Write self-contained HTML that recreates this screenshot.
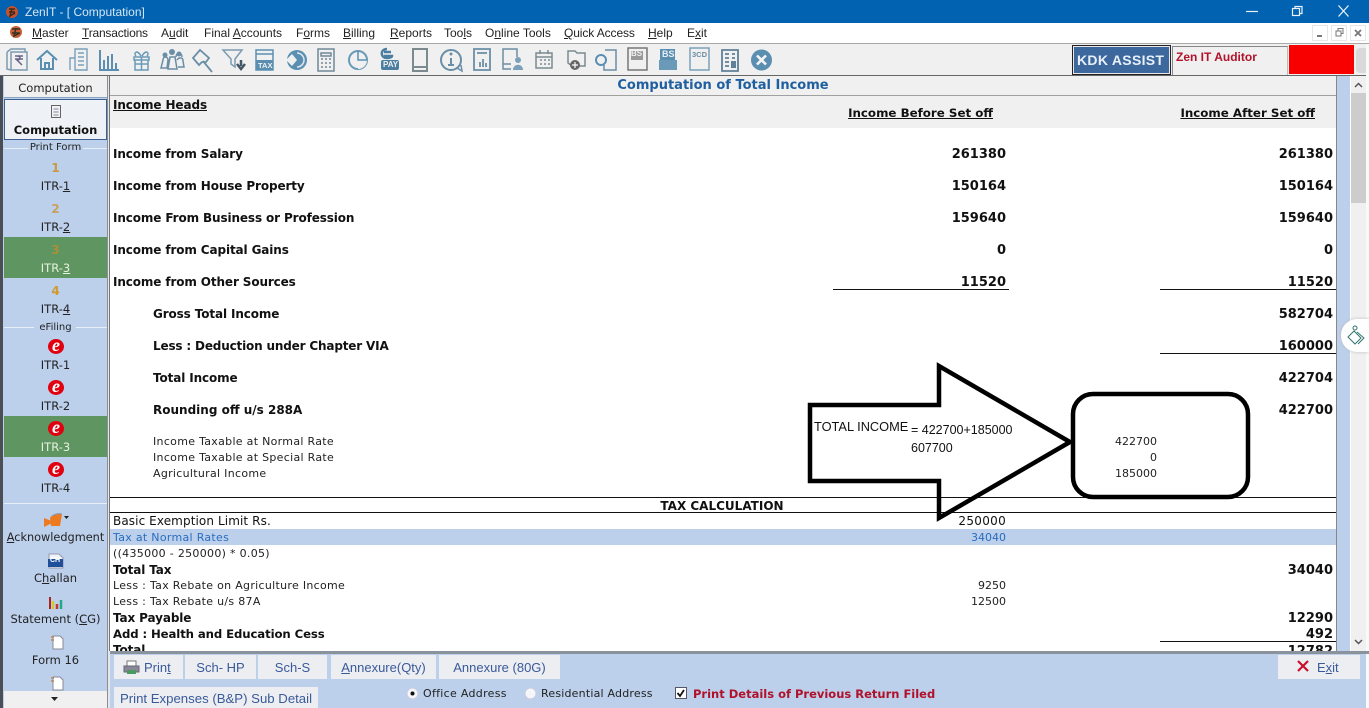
<!DOCTYPE html>
<html><head><meta charset="utf-8"><title>ZenIT - [ Computation]</title>
<style>
html,body{margin:0;padding:0;background:#fff}
#p{position:relative;width:1369px;height:708px;overflow:hidden;background:#fff;font-family:"DejaVu Sans",sans-serif;color:#111}
#p div{position:absolute}
.t{white-space:nowrap;line-height:16px;height:16px}
.b{font-weight:bold;font-size:12px;color:#111;margin-top:1px;letter-spacing:-.12px}
.b.r{margin-top:2px;letter-spacing:0}
.n{font-size:11px;color:#222;margin-top:1px;letter-spacing:.3px}
.n.r{letter-spacing:0}
.m{font-size:12px;color:#111;letter-spacing:.1px}
.r{text-align:right}
.menu{font-family:"Liberation Sans",sans-serif;font-size:12px;color:#222;top:25px;white-space:nowrap;line-height:16px}
.side{font-size:11.500px;color:#222;left:4px;width:103px;text-align:center;line-height:14px;white-space:nowrap}
.num{font-weight:bold;font-size:12px;line-height:14px}
.tab{background:#eceef2;font-family:"Liberation Sans",sans-serif;font-size:13px;color:#3a5a9a;text-align:center;line-height:25px;white-space:nowrap}
u{text-decoration:underline}
.ln{background:#111;height:1px}
</style></head><body>
<div id="p">
<!-- title bar -->
<div style="left:0;top:0;width:1369px;height:23px;background:#0062b0"></div>
<svg style="position:absolute;left:5px;top:5px" width="14" height="14"><circle cx="7" cy="7" r="6" fill="#c8502a"/><path d="M4 4h6M4 7h6M7 4l-2 7 5-3" stroke="#3a2a20" stroke-width="1.5" fill="none"/></svg>
<div class="t" style="left:25px;top:4px;font-family:'Liberation Sans',sans-serif;font-size:12px;color:#d6e6f5">ZenIT - [ Computation]</div>
<svg style="position:absolute;left:1240px;top:0" width="125" height="23" fill="none" stroke="#e8f2fa" stroke-width="1.2"><path d="M6 11.5h12"/><rect x="52.5" y="8.5" width="7" height="7"/><path d="M55 8.5v-2h7v7h-2"/><path d="M98.500 5.500l10 11M108.500 5.500l-10 11" stroke-width="1.300"/></svg>
<!-- menu -->
<div style="left:0;top:23px;width:1369px;height:20px;background:#fff"></div>
<svg style="position:absolute;left:9px;top:25px" width="16" height="14"><circle cx="7" cy="7" r="6" fill="#c8603a"/><path d="M3 4h8M3 8h8M7 3l-2 8 6-3" stroke="#3a3020" stroke-width="1.500" fill="none"/></svg>
<div class="menu" style="left:32px"><u>M</u>aster</div>
<div class="menu" style="left:82px;letter-spacing:-.2px"><u>T</u>ransactions</div>
<div class="menu" style="left:161px">A<u>u</u>dit</div>
<div class="menu" style="left:204px">Final <u>A</u>ccounts</div>
<div class="menu" style="left:296px">F<u>o</u>rms</div>
<div class="menu" style="left:343px"><u>B</u>illing</div>
<div class="menu" style="left:390px"><u>R</u>eports</div>
<div class="menu" style="left:444px">Too<u>l</u>s</div>
<div class="menu" style="left:485px">O<u>n</u>line Tools</div>
<div class="menu" style="left:564px;letter-spacing:-.1px"><u>Q</u>uick Access</div>
<div class="menu" style="left:648px"><u>H</u>elp</div>
<div class="menu" style="left:687px">E<u>x</u>it</div>
<svg style="position:absolute;left:1312px;top:24px" width="55" height="18" fill="none" stroke="#777"><rect x="0.500" y="1.500" width="15" height="15" stroke="#e6e6e6"/><rect x="19.500" y="1.500" width="15" height="15" stroke="#e6e6e6"/><rect x="38.500" y="1.500" width="15" height="15" stroke="#e6e6e6"/><path d="M5 12h5" stroke-width="2"/><path d="M24 7h5v5h-5zM26 7V4.500h5v5h-2"/><path d="M43 6l6 6M49 6l-6 6" stroke-width="1.800"/></svg>
<!-- toolbar -->
<div style="left:0;top:43px;width:1369px;height:1px;background:#a8a8a8"></div>
<div style="left:0;top:44px;width:1369px;height:31px;background:#f0f0f0"></div>
<div style="left:0;top:75px;width:1369px;height:1px;background:#666"></div>
<svg style="position:absolute;left:0;top:43px" width="790" height="31" fill="none" stroke="#5b8fb2" stroke-width="1.500">
<g stroke="#7a9bb0"><path d="M7 9l4-3h14v3M7 9v17l4 1V9h16v18H11"/><path d="M15 13h8M15 16h8M17 13c4 0 4 4 0 4l5 5" stroke="#668"/></g>
<path d="M37 17l10-9 10 9M41 15v11h12V15M45 26v-6h4v6" stroke-width="2"/>
<path d="M70 27V15h5v12M75 27V6h12v21zM78 10h6M78 14h6M78 18h6M78 22h6" stroke-width="1.400" stroke="#7aa0ba"/>
<path d="M100 7v20h19M104 26v-9M108 26v-13M112 26V11M116 26v-6" stroke-width="2"/>
<path d="M134 14h15v3h-15zM135 17v10h13V17M141.500 14v13M135 21h13M141 13c-4-7-8-3-5 0M142 13c4-7 8-3 5 0" stroke="#6a9ab8"/>
<path d="M163 17c0-4 5-4 5 0l-1 8h-6zM176 14c0-5 6-5 6 0M168 26l2-12h5l2 12zM177 17c2-3 6-3 6 1l1 6h-6" stroke="#6a8ea6"/><circle cx="172" cy="9" r="3" fill="#6a8ea6" stroke="none"/><circle cx="165" cy="12" r="2.500" fill="#6a8ea6" stroke="none"/><circle cx="179" cy="11" r="2.500" fill="#6a8ea6" stroke="none"/>
<path d="M193 15l7-8 9 8-3 4-4 0-3 3zM203 18l9 11" stroke="#6a8ea6" stroke-width="1.800"/>
<path d="M223 7h19l-7 9v8l-4-3v-5z" stroke="#7a9bb0"/><path d="M241 17v6M237 21l4 5 4-5" stroke="#456" stroke-width="2.500"/>
<path d="M256 7h17v20h-17zM256 11h17" stroke="#5b8fb2"/><rect x="256" y="17" width="17" height="10" fill="#5b8fb2" stroke="none"/>
<circle cx="297" cy="17" r="10" fill="#5b8fb2" stroke="none"/><path d="M286 17l6-6 5 6-5 6z" fill="#f0f0f0" stroke="none"/><path d="M297 10a7 7 0 0 1 0 14" stroke="#dfe8ee"/>
<path d="M318 6h16v22h-16zM321 10h10v3h-10zM321 16h2M325 16h2M329 16h2M321 20h2M325 20h2M329 20h2M321 24h2M325 24h2M329 24h2" stroke="#6f8797"/>
<circle cx="358" cy="17" r="9" stroke="#6a9ab8" stroke-width="2"/><path d="M358 17h9a9 9 0 0 1-9 9z" fill="#f0f0f0" stroke="none"/><path d="M358 8v9h9"/>
<path d="M387 6c-7 0-7 9 0 9 3 0 5-1 5-2h-8M384 9h7" stroke="#4c7ea2" stroke-width="2.500"/><rect x="381" y="17" width="18" height="10" rx="2" fill="#4c7ea2" stroke="none"/>
<path d="M413 6h14v22h-14zM413 24h14" stroke="#7b8a8f" stroke-width="2"/>
<circle cx="451" cy="17" r="10" stroke="#6a8ea6" stroke-width="2"/><path d="M451 15v7M448 22h6" stroke="#6a8ea6" stroke-width="2"/><circle cx="451" cy="11" r="1.500" fill="#6a8ea6" stroke="none"/><path d="M457 25l5 3-1-6" stroke="#6a8ea6"/>
<path d="M474 6h16v21h-16zM477 10h10M480 24v-5M483 24v-8M486 24v-4" stroke="#6a8ea6" stroke-width="1.800"/>
<path d="M511 26h-8V6h14v8M503 21h8" stroke="#6a8ea6" stroke-width="1.500"/><circle cx="518" cy="17" r="3" fill="#7aa0ba" stroke="none"/><path d="M513 27c0-7 10-7 10 0z" fill="#7aa0ba" stroke="none"/>
<path d="M536 10h16v15h-16zM536 14h16M540 7v4M548 7v4M540 17h2M544 17h2M548 17h2M540 21h2M544 21h2M548 21h2" stroke="#7b8a8f"/>
<path d="M568 8h7l2 2h8v13h-13l-4-3z" stroke="#7b8a8f" stroke-width="1.500"/><circle cx="575" cy="22" r="5" fill="#666" stroke="none"/><path d="M572 22h6M575 19v6" stroke="#fff" stroke-width="1.200"/>
<path d="M605 7h11v20h-12v-5" stroke="#6a8ea6"/><circle cx="601" cy="17" r="5" stroke="#5b8fb2" stroke-width="2"/>
<path d="M628 5h19v22h-19z" stroke="#777" stroke-width="1.500"/><rect x="631" y="8" width="12" height="9" fill="#999" stroke="none"/>
<rect x="660" y="6" width="15" height="11" fill="#5b8fb2" stroke="none"/><rect x="659" y="17" width="18" height="10" fill="#6a9ab8" stroke="none"/>
<path d="M690 5h19v22h-19z" stroke="#7aa0ba"/>
<path d="M722 7h16v21h-16zM725 11h4M725 15h4M725 19h4M725 23h4M732 11h3M732 15h3" stroke="#5f8098" stroke-width="1.800"/><rect x="731" y="18" width="5" height="7" fill="#5f8098" stroke="none"/>
<circle cx="761.500" cy="17" r="10.500" fill="#5b8fb2" stroke="none"/><path d="M757 12.500l9 9M766 12.500l-9 9" stroke="#f4f4f4" stroke-width="2.600"/>
</svg>
<div class="t" style="left:258px;top:62px;font-size:7.500px;color:#f0f0f0;font-weight:bold;height:8px;line-height:8px;font-family:'Liberation Sans',sans-serif">TAX</div>
<div class="t" style="left:383px;top:61px;font-size:8px;color:#f0f0f0;font-weight:bold;height:8px;line-height:8px;font-family:'Liberation Sans',sans-serif">PAY</div>
<div class="t" style="left:631px;top:49px;font-size:8px;color:#f0f0f0;font-weight:bold;height:10px;line-height:10px;font-family:'Liberation Sans',sans-serif">BS</div>
<div class="t" style="left:662px;top:49px;font-size:9px;color:#e6eef5;font-weight:bold;height:10px;line-height:10px;font-family:'Liberation Sans',sans-serif">BS</div>
<div class="t" style="left:692px;top:50px;font-size:7.500px;color:#6a8ea6;font-weight:bold;height:9px;line-height:9px;font-family:'Liberation Sans',sans-serif">3CD</div>
<!-- KDK -->
<div style="left:1072px;top:45px;width:99px;height:30px;background:#3c689e;border:1px solid #222;box-sizing:border-box;outline:1px solid #e8e8e8;outline-offset:-2px"></div>
<div class="t" style="left:1077px;top:51px;font-size:14px;font-weight:bold;color:#e8f0f8;font-family:'Liberation Sans',sans-serif;letter-spacing:.3px;line-height:18px;height:18px">KDK ASSIST</div>
<div style="left:1172px;top:46px;width:116px;height:29px;background:#f0f0f0;border-left:1px solid #888;border-top:1px solid #888;border-right:1px solid #bbb;box-sizing:border-box"></div>
<div class="t" style="left:1176px;top:49px;font-size:12px;font-weight:bold;color:#b2122a;font-family:'Liberation Sans',sans-serif">Zen IT Auditor</div>
<div style="left:1289px;top:45px;width:65px;height:29px;background:#f80000"></div>
<div style="left:1356px;top:48px;width:10px;height:25px;background:#d9d9d9;border-radius:4px 0 0 4px"></div>
<!-- left edge and panel -->
<div style="left:0;top:76px;width:3px;height:632px;background:#4a4f56"></div>
<div style="left:3px;top:76px;width:105px;height:632px;background:#bcd0ec"></div>
<div style="left:107px;top:76px;width:1px;height:632px;background:#8a8f96"></div>
<div style="left:108px;top:76px;width:2px;height:632px;background:#e4e6ea"></div>
<div style="left:109px;top:76px;width:1px;height:575px;background:#777"></div>
<div style="left:4px;top:76px;width:103px;height:22px;background:#f0f0f0;border-bottom:1px solid #8aa4c4;box-sizing:border-box"></div>
<div class="side" style="top:81px">Computation</div>
<div style="left:4px;top:99px;width:103px;height:41px;background:#eef1f5;border:1px solid #3c5f90;box-sizing:border-box"></div>
<svg style="position:absolute;left:50px;top:104px" width="12" height="15" fill="none" stroke="#666"><rect x="1.500" y="1.500" width="9" height="12"/><path d="M3.500 5h5M3.500 8h5M3.500 11h5" stroke="#889"/></svg>
<div class="side" style="top:123px;font-weight:bold;color:#111">Computation</div>
<!-- section labels -->
<div style="left:4px;top:148px;width:24px;height:1px;background:#e8eef6"></div><div style="left:83px;top:148px;width:24px;height:1px;background:#e8eef6"></div>
<div class="side" style="top:141px;font-size:10px">Print Form</div>
<div style="left:4px;top:327px;width:30px;height:1px;background:#e8eef6"></div><div style="left:76px;top:327px;width:31px;height:1px;background:#e8eef6"></div>
<div class="side" style="top:321px;font-size:10px">eFiling</div>
<!-- green -->
<div style="left:4px;top:237px;width:103px;height:41px;background:#5f9560"></div>
<div style="left:4px;top:416px;width:103px;height:41px;background:#5f9560"></div>
<!-- ITR print -->
<div class="side num" style="top:161px;color:#c89a40">1</div>
<div class="side" style="top:179px">ITR-<u>1</u></div>
<div class="side num" style="top:202px;color:#c8a060">2</div>
<div class="side" style="top:220px">ITR-<u>2</u></div>
<div class="side num" style="top:243px;color:#a89038">3</div>
<div class="side" style="top:261px;color:#e6f2e0">ITR-<u>3</u></div>
<div class="side num" style="top:284px;color:#d09a30">4</div>
<div class="side" style="top:302px">ITR-<u>4</u></div>
<!-- efiling -->
<svg style="position:absolute;left:48px;top:338px" width="16" height="17"><ellipse cx="8" cy="8.500" rx="8" ry="7.500" fill="#e00010"/></svg>
<div class="side" style="left:48px;width:16px;top:337px;font:italic bold 18px/16px 'Liberation Serif',serif;color:#fff">e</div>
<div class="side" style="top:358px">ITR-1</div>
<svg style="position:absolute;left:48px;top:379px" width="16" height="17"><ellipse cx="8" cy="8.500" rx="8" ry="7.500" fill="#e00010"/></svg>
<div class="side" style="left:48px;width:16px;top:378px;font:italic bold 18px/16px 'Liberation Serif',serif;color:#fff">e</div>
<div class="side" style="top:399px">ITR-2</div>
<svg style="position:absolute;left:48px;top:420px" width="16" height="17"><ellipse cx="8" cy="8.500" rx="8" ry="7.500" fill="#e00010"/></svg>
<div class="side" style="left:48px;width:16px;top:419px;font:italic bold 18px/16px 'Liberation Serif',serif;color:#fff">e</div>
<div class="side" style="top:440px;color:#e6f2e0">ITR-3</div>
<svg style="position:absolute;left:48px;top:461px" width="16" height="17"><ellipse cx="8" cy="8.500" rx="8" ry="7.500" fill="#e00010"/></svg>
<div class="side" style="left:48px;width:16px;top:460px;font:italic bold 18px/16px 'Liberation Serif',serif;color:#fff">e</div>
<div class="side" style="top:481px">ITR-4</div>
<div style="left:4px;top:503px;width:103px;height:1px;background:#e8eef6"></div>
<!-- lower side -->
<svg style="position:absolute;left:42px;top:512px" width="28" height="16"><path d="M2 6l10 4-10 5z" fill="#ee7a20"/><path d="M8 6c2-4 8-6 12-4l-2 12H9z" fill="#ee7a20"/><path d="M10 4c3-2 6-3 10-2" stroke="#7aa0c8" fill="none"/><path d="M22 4h5l-2.500 3z" fill="#222"/></svg>
<div class="side" style="top:531px;font-size:11.300px"><u>A</u>cknowledgment</div>
<svg style="position:absolute;left:47px;top:553px" width="18" height="16"><path d="M2 1h10l4 4v10H2z" fill="#eef3fa" stroke="#99a"/><rect x="1" y="6" width="15" height="8" fill="#1f4f9a"/></svg>
<div class="t" style="left:50px;top:556px;font-size:7px;font-weight:bold;color:#fff;font-family:'Liberation Sans',sans-serif;line-height:10px;height:10px">CH</div>
<div class="side" style="top:571px">C<u>h</u>allan</div>
<svg style="position:absolute;left:49px;top:596px" width="16" height="14"><path d="M1 1v12" stroke="#a22" stroke-width="2"/><path d="M4 13V5" stroke="#cc3" stroke-width="2.500"/><path d="M8 13V8" stroke="#c33" stroke-width="2.500"/><path d="M12 13V4" stroke="#2a8" stroke-width="2.500"/></svg>
<div class="side" style="top:612px">Statement (<u>C</u>G)</div>
<svg style="position:absolute;left:49px;top:634px" width="16" height="16"><path d="M4 2h7l3 3v10H4z" fill="#fff" stroke="#889"/><path d="M2 3h3M2 6h3" stroke="#b85" stroke-width="1.500"/></svg>
<div class="side" style="top:653px">Form 16</div>
<svg style="position:absolute;left:49px;top:675px" width="16" height="16"><path d="M4 2h7l3 3v10H4z" fill="#fff" stroke="#889"/><path d="M2 3h3M2 6h3" stroke="#b85" stroke-width="1.500"/></svg>
<div style="left:4px;top:691px;width:103px;height:17px;background:#f0f0f0"></div>
<svg style="position:absolute;left:51px;top:697px" width="8" height="5"><path d="M0 0h7l-3.500 4z" fill="#222"/></svg>
<!-- header band -->
<div style="left:110px;top:76px;width:1227px;height:19px;background:#f0f0f0"></div>
<div style="left:110px;top:95px;width:1227px;height:1px;background:#a0a0a0"></div>
<div style="left:110px;top:96px;width:1227px;height:32px;background:#f0f0f0"></div>
<div class="t" style="left:523px;width:400px;top:78px;text-align:center;font-size:13px;font-weight:bold;color:#1f5fa0">Computation of Total Income</div>
<div class="t b" style="left:113px;top:97px;margin-top:0;letter-spacing:-.1px"><u>Income Heads</u></div>
<div class="t b r" style="left:693px;width:300px;top:105px;margin-top:0;font-size:11.850px"><u>Income Before Set off</u></div>
<div class="t b r" style="left:1015px;width:300px;top:105px;margin-top:0;font-size:11.850px"><u>Income After Set off</u></div>
<!-- rows -->
<div class="t b" style="left:113px;top:145px">Income from Salary</div>
<div class="t b r" style="left:806px;width:200px;top:145px;font-size:13px">261380</div>
<div class="t b r" style="left:1133px;width:200px;top:145px;font-size:13px">261380</div>
<div class="t b" style="left:113px;top:177px">Income from House Property</div>
<div class="t b r" style="left:806px;width:200px;top:177px;font-size:13px">150164</div>
<div class="t b r" style="left:1133px;width:200px;top:177px;font-size:13px">150164</div>
<div class="t b" style="left:113px;top:209px">Income From Business or Profession</div>
<div class="t b r" style="left:806px;width:200px;top:209px;font-size:13px">159640</div>
<div class="t b r" style="left:1133px;width:200px;top:209px;font-size:13px">159640</div>
<div class="t b" style="left:113px;top:241px">Income from Capital Gains</div>
<div class="t b r" style="left:806px;width:200px;top:241px;font-size:13px">0</div>
<div class="t b r" style="left:1133px;width:200px;top:241px;font-size:13px">0</div>
<div class="t b" style="left:113px;top:273px">Income from Other Sources</div>
<div class="t b r" style="left:806px;width:200px;top:273px;font-size:13px">11520</div>
<div class="t b r" style="left:1133px;width:200px;top:273px;font-size:13px">11520</div>
<div class="ln" style="left:833px;top:289px;width:176px"></div>
<div class="ln" style="left:1160px;top:289px;width:176px"></div>
<div class="t b" style="left:153px;top:305px">Gross Total Income</div>
<div class="t b r" style="left:1133px;width:200px;top:305px;font-size:13px">582704</div>
<div class="t b" style="left:153px;top:337px;letter-spacing:-.17px">Less : Deduction under Chapter VIA</div>
<div class="t b r" style="left:1133px;width:200px;top:337px;font-size:13px">160000</div>
<div class="ln" style="left:1160px;top:353px;width:176px"></div>
<div class="t b" style="left:153px;top:369px">Total Income</div>
<div class="t b r" style="left:1133px;width:200px;top:369px;font-size:13px">422704</div>
<div class="t b" style="left:153px;top:401px;letter-spacing:0">Rounding off u/s 288A</div>
<div class="t b r" style="left:1133px;width:200px;top:401px;font-size:13px">422700</div>
<div class="t n" style="left:153px;top:433px">Income Taxable at Normal Rate</div>
<div class="t n" style="left:153px;top:449px">Income Taxable at Special Rate</div>
<div class="t n" style="left:153px;top:465px">Agricultural Income</div>
<div class="t n r" style="left:957px;width:200px;top:433px">422700</div>
<div class="t n r" style="left:957px;width:200px;top:449px">0</div>
<div class="t n r" style="left:957px;width:200px;top:465px">185000</div>
<!-- tax calc -->
<div class="ln" style="left:110px;top:497px;width:1227px"></div>
<div class="ln" style="left:110px;top:512px;width:1227px"></div>
<div class="t b" style="left:522px;width:400px;top:498px;text-align:center;margin-top:0;letter-spacing:0">TAX CALCULATION</div>
<div class="t m" style="left:113px;top:513px">Basic Exemption Limit Rs.</div>
<div class="t m r" style="left:806px;width:200px;top:513px;letter-spacing:.3px">250000</div>
<div style="left:110px;top:529px;width:1227px;height:16px;background:#bcd0ec"></div>
<div class="t n" style="left:113px;top:529px;color:#2a6cc0">Tax at Normal Rates</div>
<div class="t n r" style="left:806px;width:200px;top:529px;color:#2a6cc0">34040</div>
<div class="t n" style="left:113px;top:545px">((435000 - 250000) * 0.05)</div>
<div class="t b" style="left:113px;top:561px">Total Tax</div>
<div class="t b r" style="left:1133px;width:200px;top:561px;font-size:13px">34040</div>
<div class="t n" style="left:113px;top:577px">Less : Tax Rebate on Agriculture Income</div>
<div class="t n r" style="left:806px;width:200px;top:577px">9250</div>
<div class="t n" style="left:113px;top:593px">Less : Tax Rebate u/s 87A</div>
<div class="t n r" style="left:806px;width:200px;top:593px">12500</div>
<div class="t b" style="left:113px;top:609px">Tax Payable</div>
<div class="t b r" style="left:1133px;width:200px;top:609px;font-size:13px">12290</div>
<div class="t b" style="left:113px;top:625px;font-size:11.700px;letter-spacing:-.1px">Add : Health and Education Cess</div>
<div class="t b r" style="left:1133px;width:200px;top:625px;font-size:13px">492</div>
<div class="ln" style="left:1160px;top:641px;width:176px"></div>
<div class="t b" style="left:113px;top:641px">Total</div>
<div class="t b r" style="left:1133px;width:200px;top:642px;font-size:13px">12782</div>
<!-- annotation -->
<svg style="position:absolute;left:800px;top:355px" width="460" height="175" fill="#fff" stroke="#000" stroke-width="4.500"><path fill="none" d="M10 50H139V11L270 87 139 163V126H10Z"/><rect x="273" y="39" width="175" height="103" rx="20" fill="none"/></svg>
<div class="t" style="left:814px;top:419px;font-family:'Liberation Sans',sans-serif;font-size:12.800px;color:#111">TOTAL INCOME</div>
<div class="t" style="left:911px;top:422px;font-family:'Liberation Sans',sans-serif;font-size:12.500px;color:#111">= 422700+185000</div>
<div class="t" style="left:911px;top:440px;font-family:'Liberation Sans',sans-serif;font-size:12.500px;color:#111">607700</div>
<!-- right strip/scrollbar -->
<div style="left:1336px;top:76px;width:1px;height:575px;background:#888"></div>
<div style="left:1337px;top:76px;width:13px;height:575px;background:#bcd0ec"></div>
<div style="left:1351px;top:76px;width:15px;height:575px;background:#f0f0f0"></div>
<div style="left:1351px;top:93px;width:15px;height:110px;background:#cdcdcd"></div>
<div style="left:1366px;top:44px;width:3px;height:664px;background:#fafafa"></div>
<svg style="position:absolute;left:1351px;top:78px" width="15" height="572" fill="none" stroke="#555" stroke-width="1.500"><path d="M4 9l3.500-3.500L11 9"/><path d="M4 562l3.500 3.500L11 562"/></svg>
<!-- floating widget -->
<div style="left:1341px;top:319px;width:28px;height:33px;background:#fff;border-radius:16px 0 0 16px;box-shadow:0 0 3px #bbb"></div>
<svg style="position:absolute;left:1346px;top:325px" width="20" height="22" fill="none" stroke="#2f7570" stroke-width="1"><circle cx="9" cy="3" r="2"/><path d="M8 6l7 7-6 6-7-7z"/><path d="M11 7l7 6-6 6"/></svg>
<!-- bottom -->
<div style="left:110px;top:651px;width:1259px;height:3px;background:#8a929c"></div>
<div style="left:110px;top:654px;width:1256px;height:54px;background:#bcd0ec"></div>
<div class="tab" style="left:114px;top:655px;width:69px;height:24px;line-height:26px;text-align:left;padding-left:30px;box-sizing:border-box">Prin<u>t</u></div>
<svg style="position:absolute;left:123px;top:660px" width="17" height="15"><rect x="4" y="1" width="9" height="5" fill="#fff" stroke="#777"/><rect x="1" y="6" width="15" height="6" fill="#889" stroke="#667"/><rect x="4" y="10" width="9" height="4" fill="#4a9a60"/></svg>
<div class="tab" style="left:185px;top:655px;width:71px;height:24px;line-height:26px">Sch- HP</div>
<div class="tab" style="left:258px;top:655px;width:69px;height:24px;line-height:26px">Sch-S</div>
<div class="tab" style="left:331px;top:655px;width:105px;height:24px;line-height:26px"><u>A</u>nnexure(Qty)</div>
<div class="tab" style="left:439px;top:655px;width:121px;height:24px;line-height:26px">Annexure (80G)</div>
<div class="tab" style="left:1278px;top:655px;width:82px;height:24px;line-height:26px;text-align:left;padding-left:39px;box-sizing:border-box">E<u>x</u>it</div>
<svg style="position:absolute;left:1297px;top:660px" width="13" height="13"><path d="M1 1l10 10M11 1L1 11" stroke="#c8102a" stroke-width="2.200"/></svg>
<div class="tab" style="left:114px;top:687px;width:204px;height:21px;line-height:23px;font-size:13.200px">Print Expenses (B&amp;P) Sub Detail</div>
<svg style="position:absolute;left:406px;top:687px" width="13" height="13"><circle cx="6.500" cy="6.500" r="5.500" fill="#f4f6fa" stroke="#ccd"/><circle cx="6.500" cy="6.500" r="2" fill="#111"/></svg>
<div class="t n" style="left:423px;top:686px;margin-top:0">Office Address</div>
<svg style="position:absolute;left:524px;top:687px" width="13" height="13"><circle cx="6.500" cy="6.500" r="5.500" fill="#f4f6fa" stroke="#ccd"/></svg>
<div class="t n" style="left:541px;top:686px;margin-top:0;letter-spacing:.2px">Residential Address</div>
<svg style="position:absolute;left:675px;top:687px" width="12" height="12"><rect x="0.500" y="0.500" width="11" height="11" fill="#fff" stroke="#556"/><path d="M2.500 6l2.500 3 4-6" stroke="#111" stroke-width="1.800" fill="none"/></svg>
<div class="t b" style="left:693px;top:686px;color:#b0102a;font-size:11.500px;margin-top:0;letter-spacing:0">Print Details of Previous Return Filed</div>
</div>
</body></html>
